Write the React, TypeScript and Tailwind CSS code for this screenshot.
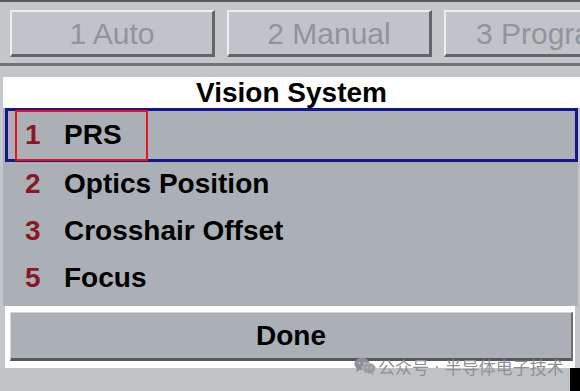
// Vision System menu screen (legacy machine UI)

const tabs = ["1 Auto", "2 Manual", "3 Program"];

const rows = [
  { key: "2", label: "Optics Position" },
  { key: "3", label: "Crosshair Offset" },
  { key: "5", label: "Focus" },
];

function WeChatIcon() {
  return (
    <svg width="22" height="18" viewBox="0 0 22 18" className="shrink-0">
      <ellipse cx="8" cy="7" rx="7.5" ry="6.2" fill="#8d9196" />
      <path d="M3 11 L2 15 L6.5 12.5 Z" fill="#8d9196" />
      <ellipse cx="15" cy="11.5" rx="6.5" ry="5.4" fill="#9a9ea3" stroke="#c1c5c8" strokeWidth="1" />
      <path d="M18.5 15.5 L20 18 L16 16.5 Z" fill="#9a9ea3" />
      <circle cx="5.5" cy="6" r="1" fill="#c1c5c8" />
      <circle cx="10.5" cy="6" r="1" fill="#c1c5c8" />
      <circle cx="13" cy="10.5" r="0.9" fill="#c1c5c8" />
      <circle cx="17" cy="10.5" r="0.9" fill="#c1c5c8" />
    </svg>
  );
}

export default function App() {
  return (
    <div className="relative w-[580px] h-[391px] overflow-hidden bg-[#c3c7ca] flex flex-col font-['Liberation_Sans',Arial,sans-serif]">
      {/* top edge */}
      <div className="h-[2px] bg-[#55595d] shrink-0" />

      {/* mode tabs */}
      <div className="flex gap-[12px] pl-[10px] pt-[8px] h-[61px] shrink-0 overflow-hidden">
        {tabs.map((t) => (
          <div
            key={t}
            className="w-[205px] h-[47px] shrink-0 flex items-center justify-center bg-[#c0c4c8] border-t-2 border-l-2 border-b-[3px] border-r-[3px] border-t-[#eceeef] border-l-[#eceeef] border-b-[#62666a] border-r-[#62666a] text-[30px] text-[#909498] whitespace-nowrap"
          >
            {t}
          </div>
        ))}
      </div>

      <div className="h-[3px] bg-[#707478] shrink-0" />
      <div className="h-[11px] shrink-0" />

      {/* title */}
      <div className="ml-[3px] h-[31px] bg-white flex items-center justify-center text-[28px] font-bold text-black shrink-0">
        Vision System
      </div>

      {/* menu list */}
      <div className="ml-[3px] mr-[2px] bg-[#abb0b6] flex flex-col h-[198px] shrink-0">
        <div className="ml-[2px] h-[54px] border-[3px] border-[#15158c] flex items-center shrink-0">
          <div className="ml-[7px] h-[51px] w-[133px] border-2 border-[#e8141c] flex items-center">
            <span className="w-[47px] pl-[8px] text-[28px] font-bold text-[#8a1824]">1</span>
            <span className="text-[28px] font-bold text-black">PRS</span>
          </div>
        </div>
        {rows.map((r) => (
          <div key={r.key} className="h-[47px] flex items-center pb-[4px] shrink-0">
            <span className="w-[61px] pl-[22px] text-[28px] font-bold text-[#8a1824]">{r.key}</span>
            <span className="text-[28px] font-bold text-black">{r.label}</span>
          </div>
        ))}
      </div>

      {/* done button */}
      <div className="ml-[5px] w-[570px] h-[62px] bg-white pl-[5px] pr-[2px] pt-[6px] pb-[7px] shrink-0">
        <div className="h-full bg-[#aab0b6] border-t border-l border-t-[#d4d7da] border-l-[#d4d7da] border-b-[3px] border-r-2 border-b-[#55595d] border-r-[#6a6e72] flex items-center justify-center text-[28px] font-bold text-black">
          Done
        </div>
      </div>

      {/* bottom strip */}
      <div className="flex-1 flex justify-end bg-[#bfc3c6]">
        <div className="w-[10px] bg-black" />
      </div>

      {/* watermark */}
      <div className="absolute left-[354px] top-[357px] flex items-center gap-[2px] text-[17px] text-[#8d9196] leading-none whitespace-nowrap">
        <WeChatIcon />
        <span className="font-['Noto_Sans_CJK_SC',sans-serif]">公众号</span>
        <span className="px-[3px]">·</span>
        <span className="font-['Noto_Sans_CJK_SC',sans-serif]">半导体电子技术</span>
      </div>
    </div>
  );
}
